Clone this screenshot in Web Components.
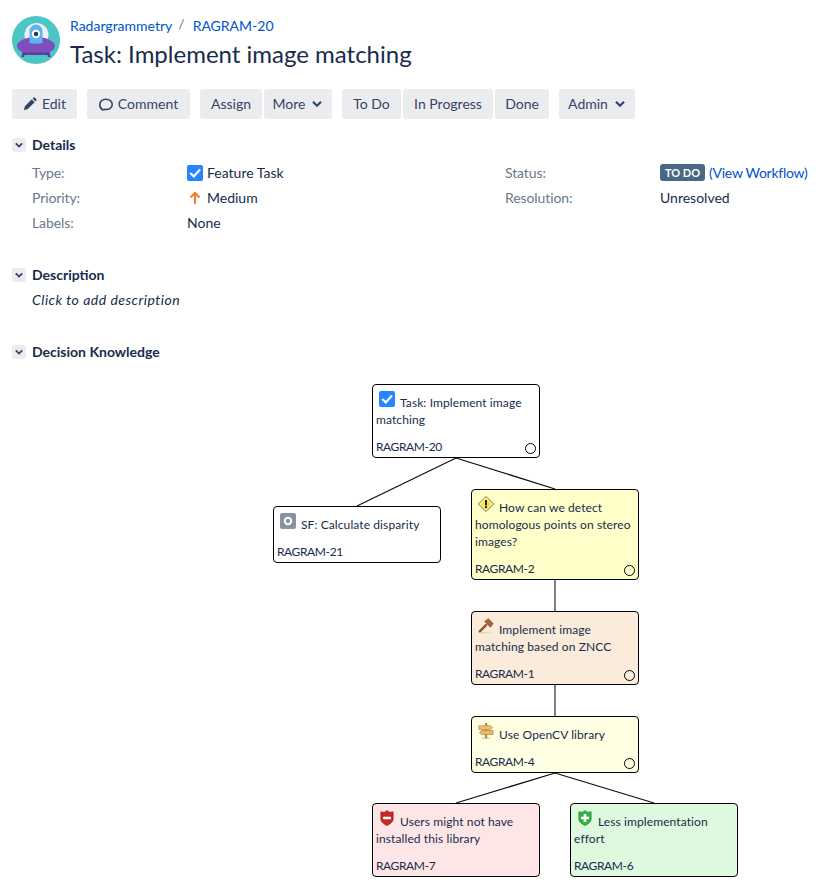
<!DOCTYPE html>
<html lang="en"><head><meta charset="utf-8"><title>RAGRAM-20</title>
<style>
html,body{margin:0;padding:0;background:#fff}
body{font:14px/20px Lato,"Noto Sans",sans-serif;color:#172B4D;width:818px;height:889px;overflow:hidden}
</style></head><body>
<issue-page></issue-page>
<template id="btn-t"><style>
:host{display:inline-flex;align-items:center;justify-content:center;height:30px;box-sizing:border-box;background:#EBECF0;border-radius:3px;color:#344563;font-size:14px;gap:5px;white-space:nowrap;width:var(--w,auto)}
::slotted(svg){display:block;flex:none}
</style><slot name="icon"></slot><slot></slot><slot name="after"></slot></template>
<script>
const NS='Lato,"Noto Sans",sans-serif';
const chev='<svg slot="after" width="12" height="12" viewBox="0 0 12 12" style="margin-left:1px"><path d="M2 3.800 6 7.800 10 3.800" fill="none" stroke="#344563" stroke-width="2.200"/></svg>';
class JBtn extends HTMLElement{constructor(){super();this.attachShadow({mode:'open'}).appendChild(document.getElementById('btn-t').content.cloneNode(true))}}
customElements.define('j-btn',JBtn);
class JSection extends HTMLElement{constructor(){super();this.attachShadow({mode:'open'}).innerHTML=`<style>
:host{display:block;font-size:14px}
.h{display:flex;align-items:center;gap:6px;height:20px;font-weight:700;color:#172B4D}
.t{width:14px;height:14px;background:#EBECF0;border-radius:3px;display:block}
</style><div class="h"><svg class="t" viewBox="0 0 14 14"><path d="M3.800 5.400 7 8.600l3.200-3.200" fill="none" stroke="#344563" stroke-width="1.800"/></svg><span id="l"></span></div><slot></slot>`;}
connectedCallback(){this.shadowRoot.getElementById('l').textContent=this.getAttribute('label')}}
customElements.define('j-section',JSection);
class JField extends HTMLElement{constructor(){super();this.attachShadow({mode:'open'}).innerHTML=`<style>
:host{display:grid;grid-template-columns:155px 1fr;height:25px;align-items:center;font-size:14px;color:#172B4D;white-space:nowrap}
.k{color:#6B778C;letter-spacing:-.1px}
.v{display:flex;align-items:center}
</style><div class="k" id="k"></div><div class="v"><slot></slot></div>`;}
connectedCallback(){this.shadowRoot.getElementById('k').textContent=this.getAttribute('label')}}
customElements.define('j-field',JField);
const ICONS={
task:'<svg width="16" height="16" viewBox="0 0 16 16"><rect width="16" height="16" rx="2" fill="#2684FF"/><path d="M3.200 8 6.800 11.400 13 4.600" fill="none" stroke="#fff" stroke-width="2.200"/></svg>',
sf:'<svg width="16" height="16" viewBox="0 0 16 16"><rect width="16" height="16" rx="2" fill="#8993A4"/><circle cx="8" cy="8" r="3.200" fill="none" stroke="#fff" stroke-width="2"/></svg>',
issue:'<svg width="16" height="16" viewBox="0 0 16 16"><path d="M8 .4 15.600 8 8 15.600.4 8Z" fill="#f5e642" stroke="#7d7d6a"/><path d="M8 2 14 8 8 14 2 8Z" fill="none" stroke="#fff8b0"/><rect x="7" y="4" width="2" height="5.400" fill="#222"/><rect x="7" y="10.200" width="2" height="2" fill="#222"/></svg>',
decision:'<svg width="16" height="16" viewBox="0 0 18 18"><ellipse cx="8" cy="16.500" rx="7.500" ry="1.200" fill="#ecd9c0"/><path d="M9 8 2 15" stroke="#8a4f22" stroke-width="2.600" stroke-linecap="round"/><path d="M7.400 3.800 11.600.8l5.400 5.400-3 4.200Z" fill="#b5622a" stroke="#7a3f18" stroke-width=".7"/></svg>',
alt:'<svg width="16" height="16" viewBox="0 0 18 18"><ellipse cx="9" cy="17" rx="5" ry="1" fill="#dcc9a0"/><rect x="7.800" y="0" width="2.600" height="17" fill="#b98a44"/><path d="M1 3h13l2.500 2.200L14 7.400H1Z" fill="#f0c070" stroke="#b98a44" stroke-width=".8"/><path d="M17 8.500H4L1.500 10.700 4 12.900h13Z" fill="#e9b868" stroke="#b98a44" stroke-width=".8"/></svg>',
con:'<svg width="16" height="16" viewBox="0 0 16 18"><path d="M8 .5 11 2.500 15 2v8c0 3.500-4 6-7 7.500C5 16 1 13.500 1 10V2l4 .5Z" fill="#c62828" stroke="#8e1b1b" stroke-width=".6"/><rect x="3.500" y="7.500" width="9" height="3" rx=".6" fill="#fff"/></svg>',
pro:'<svg width="16" height="16" viewBox="0 0 16 18"><path d="M8 .5 11 2.500 15 2v8c0 3.500-4 6-7 7.500C5 16 1 13.500 1 10V2l4 .5Z" fill="#2fb344" stroke="#1c8a30" stroke-width=".6"/><path d="M6.500 4.500h3v3h3v3h-3v3h-3v-3h-3v-3h3Z" fill="#fff"/></svg>'};
class DkNode extends HTMLElement{constructor(){super();this.attachShadow({mode:'open'}).innerHTML=`<style>
:host{display:flex;flex-direction:column;position:absolute;box-sizing:border-box;width:168px;border:1px solid #000;border-radius:4px;padding:6px 3px 2px;font-size:12px;line-height:17px;color:#172B4D;background:var(--bg,#fff);letter-spacing:.1px}
.d{flex:1}
.i{display:inline-block;margin:0 5px 0 3px;width:16px;height:16px}
.i svg{display:block}
.k{white-space:nowrap;height:17px;letter-spacing:-.4px}
.c{position:absolute;right:3px;bottom:3px;width:9px;height:9px;border:1px solid #000;border-radius:50%}
</style><div class="d"><span class="i" id="i"></span><slot></slot></div><div class="k" id="k"></div><div class="c" id="c"></div>`;}
connectedCallback(){const s=this.shadowRoot;s.getElementById('i').innerHTML=ICONS[this.getAttribute('icon')];s.getElementById('k').textContent=this.getAttribute('key');if(this.hasAttribute('nodot'))s.getElementById('c').remove()}}
customElements.define('dk-node',DkNode);
class DkTree extends HTMLElement{constructor(){super();this.attachShadow({mode:'open'}).innerHTML=`<style>
:host{display:block;position:relative;height:515px}
svg{position:absolute;left:0;top:0}
</style><svg width="818" height="515" viewBox="0 362 818 515"><g fill="none">
<path d="M456 458 357 506M456 458 555 489M555 773 456 803M555 773 654 803" stroke="#111" stroke-width="1.300"/>
<path d="M555 580V611M555 685V716" stroke="#808080" stroke-width="2"/></g></svg><slot></slot>`;}}
customElements.define('dk-tree',DkTree);
class IssuePage extends HTMLElement{constructor(){super();this.attachShadow({mode:'open'}).innerHTML=`<style>
:host{display:block;padding:16px 0 0 12px;font-family:${NS}}
a{color:#0052CC;text-decoration:none}
.head{display:flex;gap:10px;align-items:flex-start;height:73px}
.crumbs{font-size:14px;line-height:20px;display:flex;height:22px;white-space:nowrap}
.sep{color:#6B778C;margin:-2px 8px 0 6px}
h1{margin:0;font-size:24px;line-height:32px;font-weight:400;color:#172B4D;white-space:nowrap}
.bar{display:flex;height:30px;margin-bottom:16px}
.grp{display:flex;gap:2px;margin-right:10px}
.cols{display:grid;grid-template-columns:473px 1fr;padding:5px 0 0 20px;height:70px;align-content:start}
.desc{padding-left:20px;font-style:italic;height:57px;line-height:30px;display:block;letter-spacing:.5px}
.val{display:inline-flex;align-items:center;gap:4px}
.wf{letter-spacing:-.27px}
.loz{display:inline-block;background:#4a6785;color:#fff;font-size:11px;font-weight:700;line-height:17px;width:45px;text-align:center;border-radius:3px;margin-right:4px}
.s2{margin-top:35px}
</style>
<div class="head">
<svg width="48" height="48" viewBox="0 0 48 48"><circle cx="24" cy="24" r="24" fill="#4BC6C4"/><path d="M11 33 9.500 41h2.500l2-7ZM37 33l1.500 8H36l-2-7Z" fill="#5C3C9E"/><circle cx="24.500" cy="19" r="12" fill="#eef1f7"/><ellipse cx="24" cy="30" rx="19" ry="9" fill="#7E4DBE"/><rect x="12" y="36.500" width="24" height="2.500" fill="#5C3C9E"/><path d="M17.500 27V15a6.500 6.500 0 0 1 13 0v12c-3 1-10 1-13 0Z" fill="#5DB4F0"/><circle cx="24" cy="18" r="4.200" fill="#fff"/><circle cx="24" cy="18" r="2.200" fill="#253858"/></svg>
<div><div class="crumbs"><a href="#">Radargrammetry</a><span class="sep">/</span><a href="#">RAGRAM-20</a></div><h1>Task: Implement image matching</h1></div>
</div>
<div class="bar">
<div class="grp"><j-btn style="--w:65px"><svg slot="icon" width="14" height="14" viewBox="0 0 16 16"><path d="M1 15 2.200 10.500 10 2.700l3.300 3.300-7.800 7.800ZM11 1.700l1-1a1 1 0 0 1 1.400 0l1.900 1.900a1 1 0 0 1 0 1.400l-1 1Z" fill="#344563"/></svg>Edit</j-btn></div>
<div class="grp"><j-btn style="--w:103px"><svg slot="icon" width="14" height="14" viewBox="0 0 16 16"><path d="M4.500 14.800c-2-1-3.600-3.200-3.600-6C.9 5 4.100 2.500 8 2.500s7.100 2.500 7.100 6-3.200 5.700-7.100 5.700c-1 0-2.300-.2-3.500.6Z" fill="none" stroke="#344563" stroke-width="1.800"/></svg>Comment</j-btn></div>
<div class="grp"><j-btn style="--w:62px">Assign</j-btn><j-btn style="--w:68px">More${chev}</j-btn></div>
<div class="grp"><j-btn style="--w:59px">To Do</j-btn><j-btn style="--w:90px">In Progress</j-btn><j-btn style="--w:54px">Done</j-btn></div>
<div class="grp"><j-btn style="--w:76px">Admin${chev}</j-btn></div>
</div>
<j-section label="Details"><div class="cols">
<div><j-field label="Type:"><span class="val">${ICONS.task}Feature Task</span></j-field>
<j-field label="Priority:"><span class="val"><svg width="16" height="16" viewBox="0 0 16 16"><path d="M8 14V3M3.500 7.500 8 3l4.500 4.500" fill="none" stroke="#F27D22" stroke-width="2"/></svg>Medium</span></j-field>
<j-field label="Labels:">None</j-field></div>
<div><j-field label="Status:"><span class="loz">TO DO</span><a class="wf" href="#">(View Workflow)</a></j-field>
<j-field label="Resolution:">Unresolved</j-field></div>
</div></j-section>
<j-section label="Description" class="s2"><span class="desc">Click to add description</span></j-section>
<j-section label="Decision Knowledge"></j-section>`;
const t=document.createElement('dk-tree');t.style.cssText='margin-left:-12px;';
t.innerHTML=`<dk-node icon="task" key="RAGRAM-20" style="left:372px;top:22px;height:74px">Task: Implement image matching</dk-node>
<dk-node icon="sf" key="RAGRAM-21" nodot style="left:273px;top:144px;height:57px">SF: Calculate disparity</dk-node>
<dk-node icon="issue" key="RAGRAM-2" style="left:471px;top:127px;height:91px;--bg:#FFFFC9">How can we detect homologous points on stereo images?</dk-node>
<dk-node icon="decision" key="RAGRAM-1" style="left:471px;top:249px;height:74px;--bg:#FAEBDA">Implement image matching based on ZNCC</dk-node>
<dk-node icon="alt" key="RAGRAM-4" style="left:471px;top:354px;height:57px;--bg:#FFFFE3">Use OpenCV library</dk-node>
<dk-node icon="con" key="RAGRAM-7" nodot style="left:372px;top:441px;height:74px;--bg:#FFE6E6">Users might not have installed this library</dk-node>
<dk-node icon="pro" key="RAGRAM-6" nodot style="left:570px;top:441px;height:74px;--bg:#DFF9DF">Less implementation effort</dk-node>`;
this.shadowRoot.appendChild(t);}}
customElements.define('issue-page',IssuePage);
</script>
</body></html>
